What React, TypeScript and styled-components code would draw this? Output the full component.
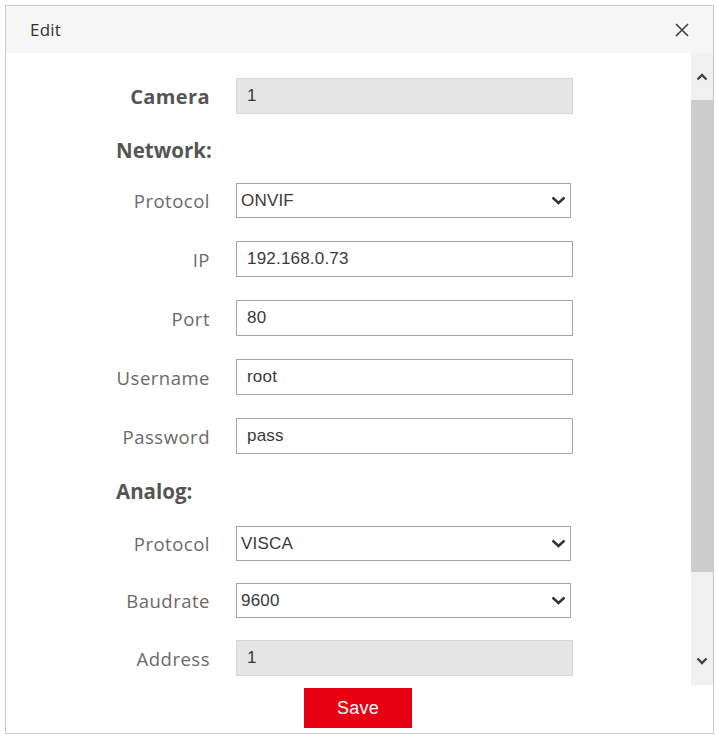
import React from "react";
import styled, { createGlobalStyle } from "styled-components";

const Global = createGlobalStyle`
  html, body { margin: 0; padding: 0; background: #ffffff; }
  body { font-family: "Open Sans", "Liberation Sans", sans-serif; }
  * { box-sizing: border-box; }
`;

const Dialog = styled.div`
  margin: 5px 0 0 5px;
  width: 709px;
  height: 729px;
  border: 1px solid #c9c9c9;
  display: flex;
  flex-direction: column;
  background: #fff;
`;

const Header = styled.div`
  height: 47px;
  flex: none;
  background: #f6f6f6;
  display: flex;
  align-items: center;
  justify-content: space-between;
  padding: 0 23px 0 24px;
`;

const Title = styled.span`
  font-family: "Open Sans", sans-serif;
  font-size: 17px;
  color: #333;
  letter-spacing: 0.2px;
`;

const CloseButton = styled.button`
  border: none;
  background: transparent;
  padding: 0;
  width: 16px;
  height: 16px;
  display: flex;
  align-items: center;
  justify-content: center;
  cursor: pointer;
`;

const Main = styled.div`
  height: 632px;
  flex: none;
  display: flex;
`;

const Content = styled.div`
  flex: 1;
  overflow: hidden;
  padding-top: 25px;
  display: flex;
  flex-direction: column;
`;

const ScrollTrack = styled.div`
  width: 22px;
  flex: none;
  background: #f0f0f0;
  display: flex;
  flex-direction: column;
  align-items: stretch;
`;

const ScrollArrow = styled.div<{ $h: number }>`
  height: ${(p) => p.$h}px;
  flex: none;
  display: flex;
  align-items: center;
  justify-content: center;
`;

const ScrollThumb = styled.div`
  height: 472px;
  flex: none;
  background: #cdcdcd;
`;

const ScrollRest = styled.div`
  flex: 1;
`;

const Row = styled.div<{ $mt: number }>`
  margin-top: ${(p) => p.$mt}px;
  display: grid;
  grid-template-columns: 204px 337px;
  column-gap: 26px;
  align-items: center;
`;

const Label = styled.label<{ $bold?: boolean }>`
  text-align: right;
  font-family: "Open Sans", sans-serif;
  font-size: ${(p) => (p.$bold ? "20px" : "18.5px")};
  font-weight: ${(p) => (p.$bold ? 700 : 400)};
  color: ${(p) => (p.$bold ? "#555" : "#6a6a6a")};
  letter-spacing: ${(p) => (p.$bold ? "0.4px" : "0.5px")};
`;

const SectionHeading = styled.div<{ $mt: number }>`
  margin-top: ${(p) => p.$mt}px;
  height: 24px;
  line-height: 24px;
  padding-left: 110px;
  font-family: "Open Sans", sans-serif;
  font-size: 20.5px;
  font-weight: 700;
  color: #555;
`;

const TextInput = styled.input<{ $disabled?: boolean }>`
  width: 337px;
  height: 36px;
  padding: 0 10px;
  border: 1px solid ${(p) => (p.$disabled ? "#d6d6d6" : "#a6a6a6")};
  background: ${(p) => (p.$disabled ? "#e5e5e5" : "#fff")};
  font-family: "Liberation Sans", Arial, sans-serif;
  font-size: 17px;
  letter-spacing: 0.2px;
  color: #3a3a3a;
  outline: none;
  border-radius: 0;
`;

const SelectWrap = styled.div`
  position: relative;
  width: 335px;
  height: 35px;
`;

const Select = styled.select`
  width: 100%;
  height: 100%;
  appearance: none;
  -webkit-appearance: none;
  border: 1px solid #a6a6a6;
  background: #fff;
  padding: 0 30px 0 4px;
  font-family: "Liberation Sans", Arial, sans-serif;
  font-size: 17px;
  letter-spacing: 0.2px;
  color: #3a3a3a;
  border-radius: 0;
  outline: none;
`;

const Chevron = styled.svg`
  position: absolute;
  right: 5px;
  top: 13px;
  pointer-events: none;
`;

const Footer = styled.div`
  flex: 1;
  display: flex;
  justify-content: center;
  align-items: flex-start;
  padding-top: 3px;
`;

const SaveButton = styled.button`
  width: 108px;
  height: 40px;
  border: none;
  background: #e60012;
  color: #fff;
  font-family: "Liberation Sans", Arial, sans-serif;
  font-size: 18px;
  letter-spacing: 0.3px;
  cursor: pointer;
  margin-left: -3px;
`;

const SelectField = ({ value, options }: { value: string; options: string[] }) => (
  <SelectWrap>
    <Select defaultValue={value}>
      {options.map((o) => (
        <option key={o}>{o}</option>
      ))}
    </Select>
    <Chevron width="15" height="9" viewBox="0 0 15 9">
      <path d="M1.5 1.5 L7.5 7 L13.5 1.5" fill="none" stroke="#333" strokeWidth="2.4" />
    </Chevron>
  </SelectWrap>
);

export default function App() {
  return (
    <>
      <Global />
      <Dialog>
        <Header>
          <Title>Edit</Title>
          <CloseButton aria-label="Close">
            <svg width="14" height="14" viewBox="0 0 14 14">
              <path d="M1 1 L13 13 M13 1 L1 13" stroke="#444" strokeWidth="1.7" fill="none" />
            </svg>
          </CloseButton>
        </Header>
        <Main>
          <Content>
            <Row $mt={0}>
              <Label $bold>Camera</Label>
              <TextInput $disabled readOnly value="1" />
            </Row>
            <SectionHeading $mt={24}>Network:</SectionHeading>
            <Row $mt={21}>
              <Label>Protocol</Label>
              <SelectField value="ONVIF" options={["ONVIF", "VAPIX"]} />
            </Row>
            <Row $mt={23}>
              <Label>IP</Label>
              <TextInput defaultValue="192.168.0.73" />
            </Row>
            <Row $mt={23}>
              <Label>Port</Label>
              <TextInput defaultValue="80" />
            </Row>
            <Row $mt={23}>
              <Label>Username</Label>
              <TextInput defaultValue="root" />
            </Row>
            <Row $mt={23}>
              <Label>Password</Label>
              <TextInput defaultValue="pass" />
            </Row>
            <SectionHeading $mt={25}>Analog:</SectionHeading>
            <Row $mt={23}>
              <Label>Protocol</Label>
              <SelectField value="VISCA" options={["VISCA", "PELCO-D", "PELCO-P"]} />
            </Row>
            <Row $mt={22}>
              <Label>Baudrate</Label>
              <SelectField value="9600" options={["2400", "4800", "9600", "19200", "38400"]} />
            </Row>
            <Row $mt={22}>
              <Label>Address</Label>
              <TextInput $disabled readOnly value="1" />
            </Row>
          </Content>
          <ScrollTrack>
            <ScrollArrow $h={47}>
              <svg width="12" height="8" viewBox="0 0 12 8">
                <path d="M1.5 6.5 L6 2 L10.5 6.5" fill="none" stroke="#444" strokeWidth="2.4" />
              </svg>
            </ScrollArrow>
            <ScrollThumb />
            <ScrollRest />
            <ScrollArrow $h={48}>
              <svg width="12" height="8" viewBox="0 0 12 8">
                <path d="M1.5 1.5 L6 6 L10.5 1.5" fill="none" stroke="#444" strokeWidth="2.4" />
              </svg>
            </ScrollArrow>
          </ScrollTrack>
        </Main>
        <Footer>
          <SaveButton>Save</SaveButton>
        </Footer>
      </Dialog>
    </>
  );
}
